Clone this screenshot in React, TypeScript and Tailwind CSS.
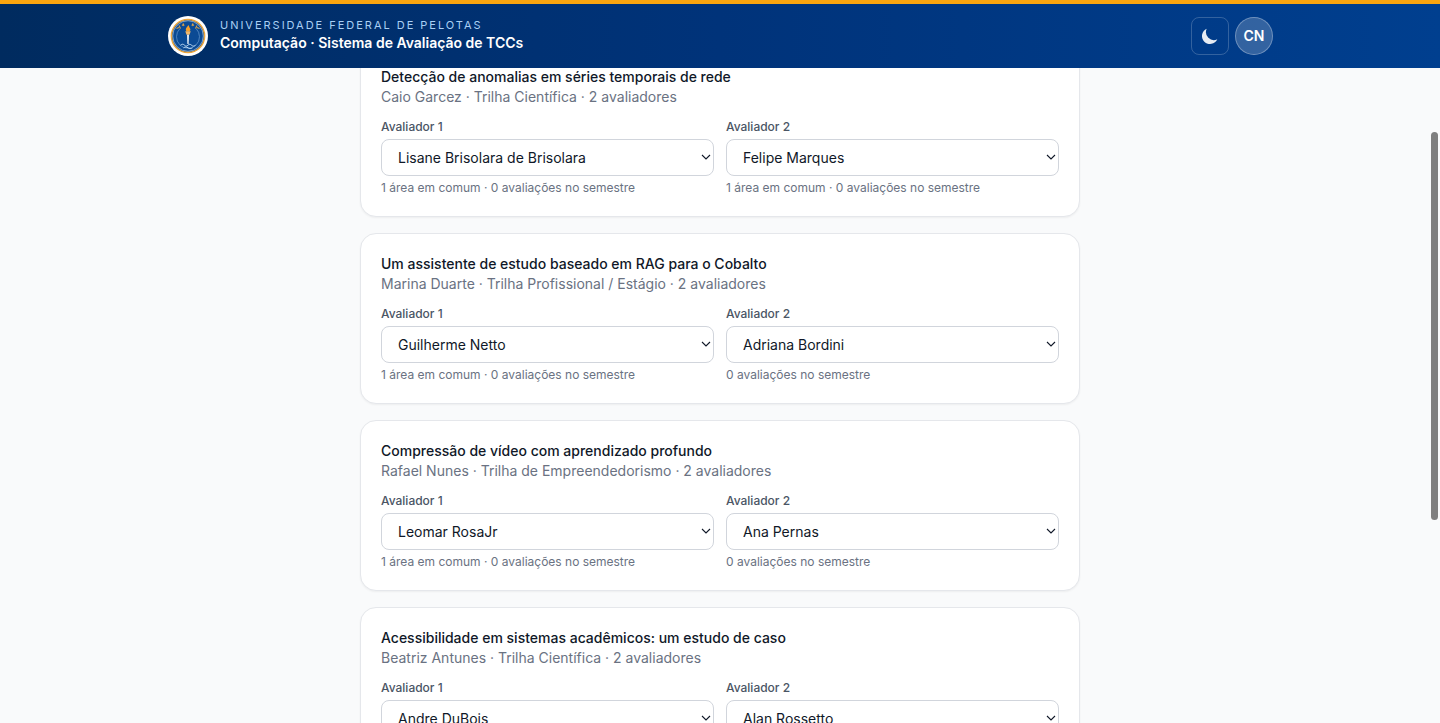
type Avaliador = { nome: string; info: string }

type Trabalho = {
    titulo: string
    detalhe: string
    avaliadores: Avaliador[]
}

const trabalhos: Trabalho[] = [
    {
        titulo: 'Detecção de anomalias em séries temporais de rede',
        detalhe: 'Caio Garcez · Trilha Científica · 2 avaliadores',
        avaliadores: [
            { nome: 'Lisane Brisolara de Brisolara', info: '1 área em comum · 0 avaliações no semestre' },
            { nome: 'Felipe Marques', info: '1 área em comum · 0 avaliações no semestre' },
        ],
    },
    {
        titulo: 'Um assistente de estudo baseado em RAG para o Cobalto',
        detalhe: 'Marina Duarte · Trilha Profissional / Estágio · 2 avaliadores',
        avaliadores: [
            { nome: 'Guilherme Netto', info: '1 área em comum · 0 avaliações no semestre' },
            { nome: 'Adriana Bordini', info: '0 avaliações no semestre' },
        ],
    },
    {
        titulo: 'Compressão de vídeo com aprendizado profundo',
        detalhe: 'Rafael Nunes · Trilha de Empreendedorismo · 2 avaliadores',
        avaliadores: [
            { nome: 'Leomar RosaJr', info: '1 área em comum · 0 avaliações no semestre' },
            { nome: 'Ana Pernas', info: '0 avaliações no semestre' },
        ],
    },
    {
        titulo: 'Acessibilidade em sistemas acadêmicos: um estudo de caso',
        detalhe: 'Beatriz Antunes · Trilha Científica · 2 avaliadores',
        avaliadores: [
            { nome: 'Andre DuBois', info: '1 área em comum · 0 avaliações no semestre' },
            { nome: 'Alan Rossetto', info: '0 avaliações no semestre' },
        ],
    },
]

function Logo() {
    return (
        <svg viewBox="0 0 40 40" className="size-10 shrink-0">
            <circle cx="20" cy="20" r="20" fill="#fff" />
            <circle cx="20" cy="20" r="16.6" fill="#0b4a94" stroke="#eda63c" strokeWidth="1.5" />
            <circle cx="20" cy="20" r="15.3" fill="none" stroke="#c9d6e4" strokeWidth="0.6" />
            <path d="M12 12.500a11.500 11.500 0 1 0 16 0" fill="none" stroke="#5d90c8" strokeWidth="0.8" />
            {/* estrelas */}
            <path d="M8.500 12.500l2.500-1M11 9.500l1.500 3M14 9.500l2-1.500M15 7.500l1 2.500M31.500 12.500l-2.500-1M29 9.500l-1.500 3M26 9.500l-2-1.500M25 7.500l-1 2.500" stroke="#d9a04a" strokeWidth="1.100" />
            {/* tocha */}
            <path d="M20.300 9c-.6 1.800-2.700 2.900-2.500 4.800.1 1.300 1 1.900 2.200 1.900s2.300-.6 2.400-1.900c.1-1.200-.8-1.700-1-2.500-.2-.8-.4-1.500-1.100-2.300z" fill="#f5a02c" />
            <path d="M17.300 15.200h5.400l-1.200 3.600h-3z" fill="#f3b768" />
            <path d="M19.100 18.800h1.800l-.3 9.200h-1.200z" fill="#fff" />
            <path d="M12.500 29.200c1.400-1.300 2.800-1.300 4 0 1.200 1.200 2.300 1.200 3.500 0s2.300-1.200 3.500 0 2.600 1.200 4 0M15.500 31.800c1.500-1 3-1 4.500 0s3 1 4.500 0" fill="none" stroke="#c3ddf5" strokeWidth="1" />
        </svg>
    )
}

function Header() {
    return (
        <header className="relative z-10 h-[68px] shrink-0 border-t-4 border-[#faa50f] bg-gradient-to-r from-[#002b5f] via-[#00337a] to-[#003f8f] text-white">
            <div className="mx-auto flex h-full max-w-6xl items-center justify-between px-6">
                <div className="flex items-center gap-3">
                    <Logo />
                    <div className="pb-0.5">
                        <p className="text-[11px] leading-4 tracking-[0.18em] text-[#a9d0f5] uppercase">Universidade Federal de Pelotas</p>
                        <p className="text-sm leading-5 font-semibold">Computação · Sistema de Avaliação de TCCs</p>
                    </div>
                </div>
                <div className="-mr-px flex items-center gap-1.5">
                    <button type="button" className="flex size-[38px] items-center justify-center rounded-lg border border-white/20">
                        <svg viewBox="0 0 20 20" className="size-5 fill-white/90">
                            <path d="M17.293 13.293A8 8 0 0 1 6.707 2.707a8.001 8.001 0 1 0 10.586 10.586z" />
                        </svg>
                    </button>
                    <button type="button" className="flex size-[38px] items-center justify-center rounded-full border border-white/30 bg-white/20 text-sm font-semibold">CN</button>
                </div>
            </div>
        </header>
    )
}

function Card({ trabalho }: { trabalho: Trabalho }) {
    return (
        <section className="rounded-2xl border border-gray-200 bg-white p-5 shadow-xs">
            <h2 className="text-sm leading-5 font-medium text-gray-900">{trabalho.titulo}</h2>
            <p className="text-sm leading-5 text-gray-500">{trabalho.detalhe}</p>
            <div className="mt-3 grid grid-cols-2 gap-3">
                {trabalho.avaliadores.map((avaliador, i) => (
                    <div key={avaliador.nome}>
                        <label className="mb-1 block text-xs font-medium text-gray-600">Avaliador {i + 1}</label>
                        <div className="relative">
                            <select className="block h-[37px] w-full appearance-none rounded-lg border border-gray-300 bg-white px-4 text-sm text-gray-900">
                                <option>{avaliador.nome}</option>
                            </select>
                            <svg viewBox="0 0 10 6" className="pointer-events-none absolute top-[15px] right-[3px] h-1.5 w-2.5 fill-none stroke-gray-900">
                                <path d="M1 1l4 4 4-4" strokeWidth="1.1" />
                            </svg>
                        </div>
                        <p className="mt-1 text-xs text-gray-500">{avaliador.info}</p>
                    </div>
                ))}
            </div>
        </section>
    )
}

export default function App() {
    return (
        <div className="relative flex h-[723px] flex-col overflow-hidden bg-[#f9fafb] font-['Inter',sans-serif]">
            <Header />
            <main className="mx-auto -mt-[22px] w-full max-w-[720px] space-y-4">
                {trabalhos.map((trabalho) => (
                    <Card key={trabalho.titulo} trabalho={trabalho} />
                ))}
            </main>
            {/* scroll */}
            <div className="absolute top-[132px] right-[2px] h-[388px] w-[7px] rounded-full bg-[#7f7f7f]" />
        </div>
    )
}
